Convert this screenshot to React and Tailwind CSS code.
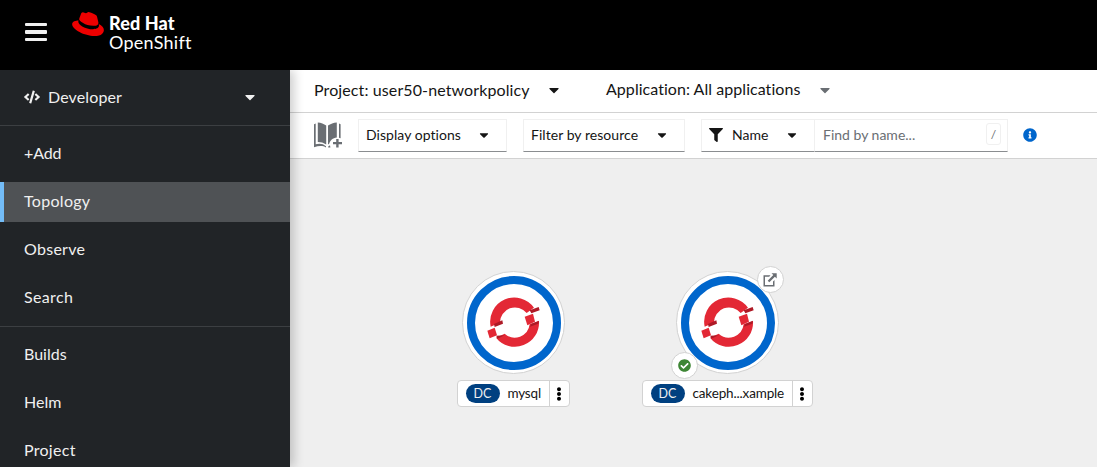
import React from "react";
import { FaCaretDown, FaCode, FaFilter, FaInfoCircle, FaCheckCircle, FaEllipsisV } from "react-icons/fa";

function RedHat() {
  return (
    <svg className="h-6 w-8" viewBox="0 2.92 24 18.16" fill="#ee0000">
      <path d="M16.009 13.386c1.577 0 3.86-.326 3.86-2.202a1.765 1.765 0 0 0-.04-.431l-.94-4.08c-.216-.898-.406-1.305-1.982-2.093-1.223-.625-3.888-1.658-4.676-1.658-.733 0-.947.946-1.822.946-.842 0-1.467-.706-2.255-.706-.757 0-1.25.515-1.63 1.576 0 0-1.06 2.99-1.197 3.424a.81.81 0 0 0-.028.245c0 1.162 4.577 4.974 10.71 4.974m4.101-1.435c.218 1.032.218 1.14.218 1.277 0 1.765-1.984 2.745-4.593 2.745-5.895.004-11.06-3.451-11.06-5.734a2.326 2.326 0 0 1 .19-.925C2.746 9.415 0 9.794 0 12.217c0 3.969 9.405 8.861 16.851 8.861 5.71 0 7.149-2.582 7.149-4.62 0-1.605-1.387-3.425-3.887-4.512" />
    </svg>
  );
}

function BookPlus() {
  return (
    <svg className="mb-px h-[26px] w-7 shrink-0" viewBox="0 0 28 26" fill="#6a6e73">
      <path d="M3.8 0.4C7 0.6 10 1.8 12.2 3.6V22.6C9.8 20.8 6.8 20 3.8 20Z" />
      <path d="M22.8 0.4C19.6 0.6 16.4 1.8 14 3.6V22.6L15.2 21.7C16 18.6 18.8 15.6 22.8 15.4Z" />
      <path d="M0 2.2L1.7 1.6V22.3C5 21.2 9 21.4 12 24.3V25.5C9 23.6 5 23.6 0 25.2Z" />
      <path d="M25 1.6L26.6 2.2V16.2L25 15.7Z" />
      <path d="M14.2 24.4L16 23.2L16.4 25.4H14.2Z" />
      <path d="M22.2 16.9H24.6V20H28V22.3H24.6V25.6H22.2V22.3H19V20H22.2Z" />
    </svg>
  );
}

function ExternalLink() {
  return (
    <svg className="mr-px h-[14px] w-[14px] shrink-0" viewBox="0 0 14 14" fill="#6a6e73">
      <path d="M0.5 2.2H7.5L6.2 3.7H2V12H10V8.5L11.5 7V13.5H0.5Z" />
      <path d="M8.5 0.3H13.7V5.5L11.9 3.7L6.3 9.3L4.7 7.7L10.3 2.1Z" />
    </svg>
  );
}

function OpenShift() {
  return (
    <svg className="h-14 w-[60px] shrink-0" viewBox="0 0 180 168">
      <path d="M20 95A72.500 72.500 0 0 1 150 38L128 54A45 45 0 0 0 48 83L30 91Z" fill="#e32835" />
      <path d="M165 78A72.500 72.500 0 0 1 36 128L62 116A45 45 0 0 0 137 88Z" fill="#e32835" />
      <path d="M10 107L32 98L39 121L17 130Z" fill="#e32835" />
      <path d="M122 65L147 56L153 80L130 91Z" fill="#e32835" />
      <path d="M30 87L55 76L57 86L32 96Z M137 46L164 36L167 46L142 55Z M141 87L165 77L163 86L138 95Z M37 122L62 121L40 131Z" fill="#ae1a26" />
    </svg>
  );
}

function Select({ icon, width, label, labelCls = "" }) {
  return (
    <div className={`flex h-[33px] shrink-0 items-center justify-between border border-[#f0f0f0] border-b-[#8a8d90] pb-px pl-[7px] pr-[15px] text-sm text-[#151515] ${width}`}>
      <span className="flex items-center gap-[9px]">
        {icon}
        <span className={`pb-px ${labelCls}`}>{label}</span>
      </span>
      <FaCaretDown size={14} />
    </div>
  );
}

function NavItem({ label, active, cls = "" }) {
  return (
    <div className={`flex h-10 shrink-0 items-center pb-0.5 text-base text-[#f0f0f0] ${active ? "border-l-4 border-[#73bcf7] bg-[#4f5255] pl-5" : "pl-6"}`}>
      <span className={cls}>{label}</span>
    </div>
  );
}

function Node({ label, pos, width, labelCls, linked }) {
  return (
    <div className={`absolute flex flex-col items-center ${pos} ${width}`}>
      <div className="relative flex h-[103px] w-[103px] items-center justify-center rounded-full border border-[#d2d2d2] bg-white">
        <div className="flex h-[94px] w-[94px] shrink-0 items-center justify-center rounded-full border-8 border-[#0066cc]">
          <OpenShift />
        </div>
        {linked && (
          <>
            <div className="absolute -top-[6px] left-[80px] flex h-[27px] w-[27px] items-center justify-center rounded-full border border-[#d2d2d2] bg-white">
              <ExternalLink />
            </div>
            <div className="absolute top-[80px] -left-[6px] flex h-[27px] w-[27px] items-center justify-center rounded-full border border-[#d2d2d2] bg-white">
              <FaCheckCircle size={13} color="#3e8635" />
            </div>
          </>
        )}
      </div>
      <div className="mt-[6px] flex h-[27px] w-full items-stretch rounded-[4px] border border-[#d2d2d2] bg-white">
        <div className="flex flex-1 items-center pl-[7.500px]">
          <span className="flex h-[19px] w-[34px] items-center justify-center rounded-full bg-[#004080] pt-px text-[12.500px] leading-none text-[#f0f0f0]">DC</span>
          <span className={`ml-2 whitespace-nowrap text-[#151515] ${labelCls}`}>{label}</span>
        </div>
        <div className="flex w-5 items-center justify-center border-l border-[#d2d2d2] pr-0.5">
          <FaEllipsisV size={14} color="#000" />
        </div>
      </div>
    </div>
  );
}

export default function App() {
  return (
    <div className="flex h-[467px] w-[1097px] flex-col overflow-hidden bg-[#efefef] font-['Lato','Liberation_Sans',sans-serif]">
      <header className="z-20 flex h-[70px] shrink-0 bg-black pl-[25px]">
        <div className="mt-[22.500px] flex w-[22px] flex-col gap-1">
          <i className="h-[3.500px] rounded-[1px] bg-[#f0f0f0]" />
          <i className="h-[3.500px] rounded-[1px] bg-[#f0f0f0]" />
          <i className="h-[3.500px] rounded-[1px] bg-[#f0f0f0]" />
        </div>
        <div className="ml-[25px] mt-3 flex">
          <RedHat />
          <div className="ml-[5px] mt-0.5 flex flex-col text-white">
            <span className="h-[19px] text-[18px] font-black leading-[19px] tracking-[0.1px]">Red Hat</span>
            <span className="h-[19px] text-[18px] leading-[19px] tracking-[0.25px]">OpenShift</span>
          </div>
        </div>
      </header>
      <div className="flex min-h-0 flex-1">
        <nav className="z-10 flex w-[290px] shrink-0 flex-col bg-[#212427] shadow-[4px_0_10px_rgba(0,0,0,0.2)]">
          <div className="flex h-14 shrink-0 items-center border-b border-[#3c3f42] pb-px pl-6 pr-8 text-base text-[#f0f0f0]">
            <FaCode size={16} />
            <span className="ml-2 flex-1 pb-px tracking-[0.12px]">Developer</span>
            <FaCaretDown size={16} />
          </div>
          <div className="flex flex-col gap-2 border-b border-[#3c3f42] py-2">
            <NavItem label="+Add" cls="tracking-[-0.1px]" />
            <NavItem label="Topology" active cls="tracking-[0.3px]" />
            <NavItem label="Observe" cls="tracking-[0.28px]" />
            <NavItem label="Search" cls="tracking-[0.35px]" />
          </div>
          <div className="flex flex-col gap-2 py-2">
            <NavItem label="Builds" />
            <NavItem label="Helm" />
            <NavItem label="Project" cls="tracking-[0.28px]" />
          </div>
        </nav>
        <main className="flex min-w-0 flex-1 flex-col">
          <div className="flex h-[43px] shrink-0 items-center border-b border-[#d2d2d2] bg-white pb-0.5 pl-6 text-base text-[#151515]">
            <div className="flex w-[292px] items-center">
              <span className="w-[232px] whitespace-nowrap pb-px tracking-[0.11px]">Project: user50-networkpolicy</span>
              <FaCaretDown size={16} />
            </div>
            <span className="w-[211px] whitespace-nowrap pb-0.5 tracking-[0.05px]">Application: All applications</span>
            <FaCaretDown size={16} color="#6a6e73" />
          </div>
          <div className="flex h-[46px] shrink-0 items-center border-b border-[#d2d2d2] bg-white pl-6">
            <BookPlus />
            <div className="ml-4 flex items-center gap-4">
              <Select width="w-[149px]" label="Display options" labelCls="tracking-[0.05px]" />
              <Select width="w-[162px]" label="Filter by resource" labelCls="tracking-[0.05px]" />
              <div className="flex">
                <Select width="w-[114px]" label="Name" icon={<FaFilter size={14} />} labelCls="tracking-[0.05px]" />
                <div className="flex h-[33px] w-[193px] items-center justify-between border border-l-0 border-[#f0f0f0] border-b-[#8a8d90] pl-2 pr-[6px] text-sm text-[#6a6e73]">
                  <span className="pb-0.5">Find by name...</span>
                  <kbd className="mb-1 flex h-[22px] w-[15px] items-center justify-center rounded-[3px] border border-[#f0f0f0] pt-0.5 font-['Lato','Liberation_Sans',sans-serif] text-xs">/</kbd>
                </div>
              </div>
              <FaInfoCircle className="-ml-px mb-0.5" size={14} color="#0066cc" />
            </div>
          </div>
          <div className="relative flex-1 bg-[#efefef]">
            <Node label="mysql" pos="left-[167px] top-[112px]" width="w-[113px]" labelCls="text-[13.500px] tracking-[-0.2px]" />
            <Node label="cakeph...xample" pos="left-[352px] top-[112px]" width="w-[171px]" labelCls="text-[13.500px] tracking-[-0.15px]" linked />
          </div>
        </main>
      </div>
    </div>
  );
}
